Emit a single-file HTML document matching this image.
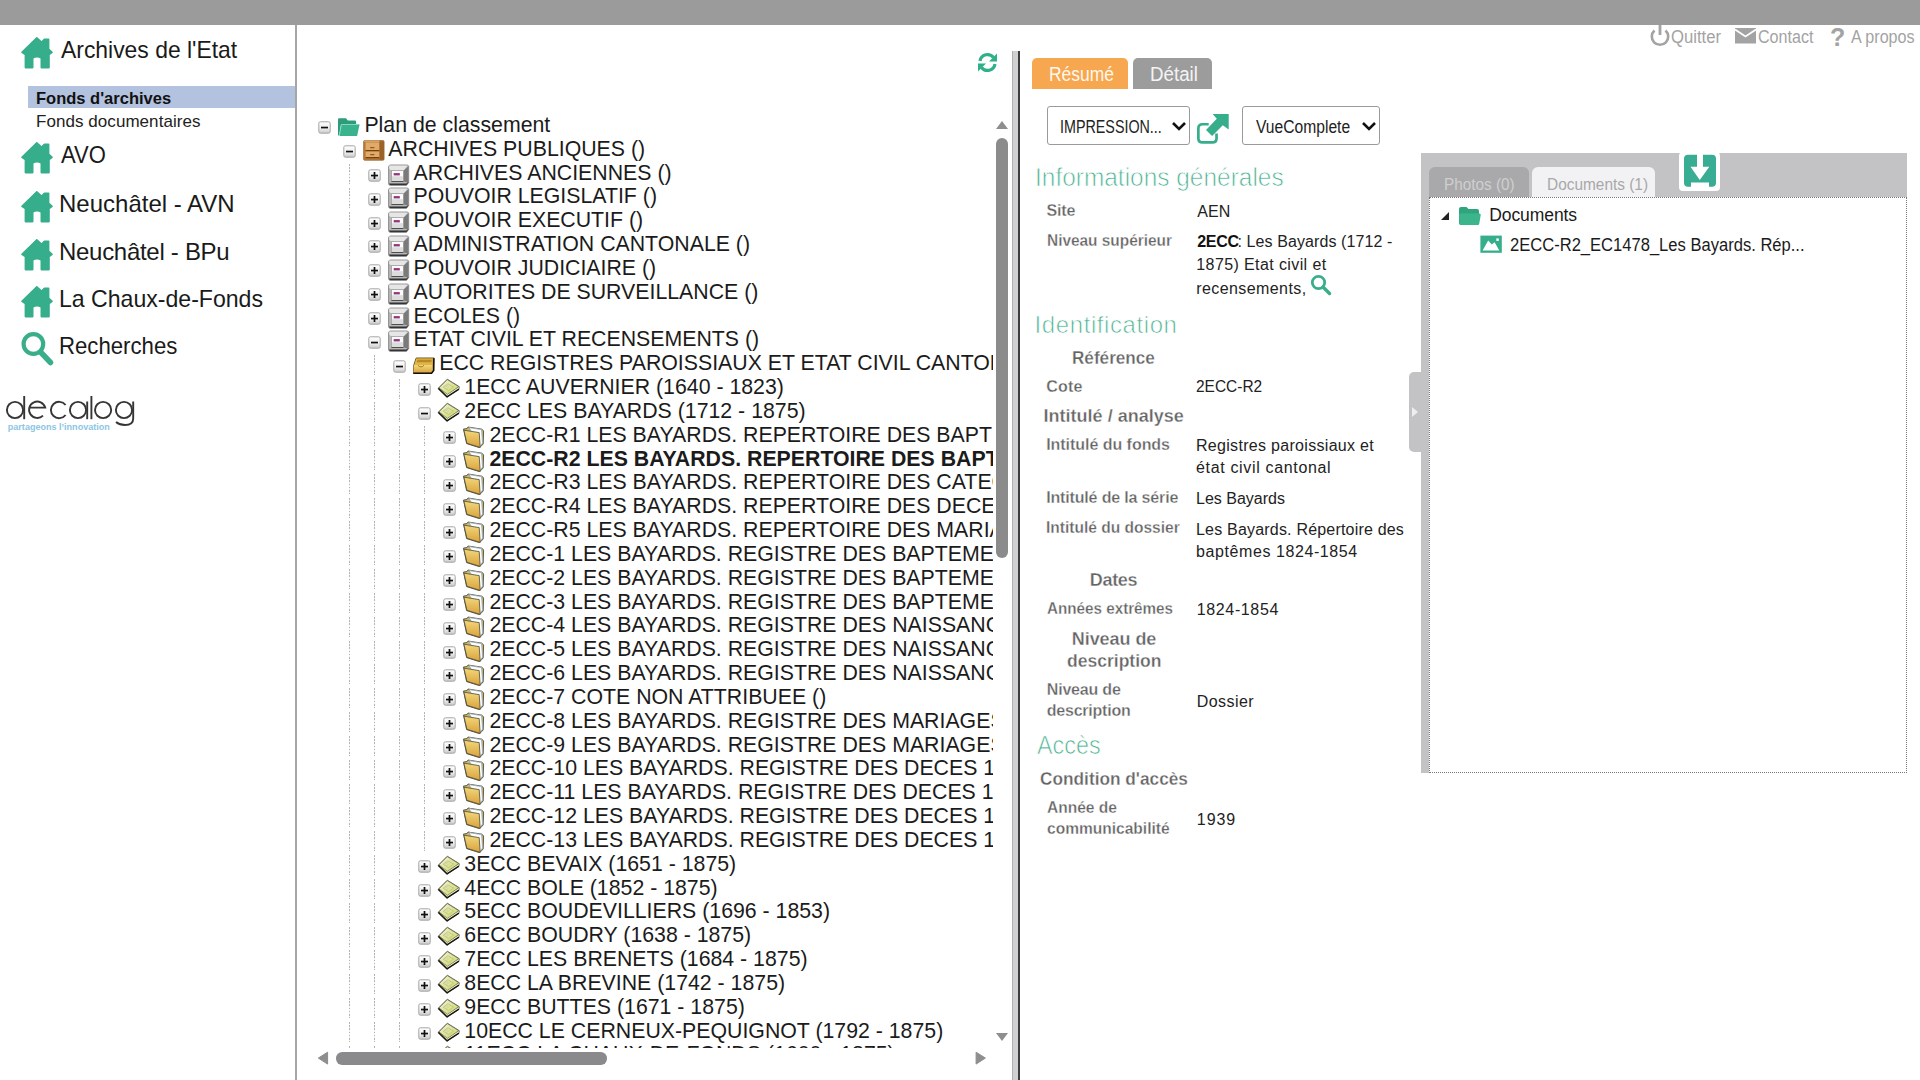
<!DOCTYPE html>
<html><head><meta charset="utf-8">
<style>
*{box-sizing:border-box}
html,body{margin:0;padding:0;width:1920px;height:1080px;overflow:hidden;background:#fff;font-family:"Liberation Sans",sans-serif}
.abs{position:absolute}
.tx{position:absolute;line-height:0;transform-origin:0 0;white-space:nowrap;font-family:"Liberation Sans",sans-serif}
#topbar{position:absolute;left:0;top:0;width:1920px;height:25px;background:#9b9b9b}
#side{position:absolute;left:0;top:25px;width:295px;height:1055px;background:#fff}
#sideline{position:absolute;left:295px;top:25px;width:2px;height:1055px;background:#a6a6a6}
#sel{position:absolute;left:28px;top:86px;width:267px;height:22px;background:#b3c2de}
#tree{position:absolute;left:300px;top:100px;width:692.5px;height:947.5px;overflow:hidden}
.tr{position:absolute;line-height:0;white-space:nowrap;font-size:21.3px;color:#1b1b1b;font-family:"Liberation Sans",sans-serif}
.pm{position:absolute;overflow:visible}
.ic{position:absolute;overflow:visible}
.gd{position:absolute;width:1px;background:repeating-linear-gradient(#b5b5b5 0 1.6px,#f2f2f2 1.6px 3.2px)}
#splitA{position:absolute;left:1012px;top:51px;width:6px;height:1029px;background:#d0cfd2;border-left:1px solid #b0b0b0}
#splitB{position:absolute;left:1018px;top:51px;width:2px;height:1029px;background:#3d3d3d}
.tab{position:absolute;top:58px;height:31px;border-radius:5px 5px 0 0}
.selbox{position:absolute;top:106px;height:39px;border:1px solid #9a9a9a;border-radius:3px;background:#fff}
#docs{position:absolute;left:1421px;top:153px;width:486px;height:620px;background:#c3c3c5}
#docin{position:absolute;left:1429px;top:197px;width:478px;height:576px;background:#fff;border:1px dotted #777}
</style></head><body>
<svg width="0" height="0" style="position:absolute">
 <defs>
  <linearGradient id="gcab" x1="0" y1="0" x2="1" y2="1"><stop offset="0" stop-color="#d99a55"/><stop offset="1" stop-color="#9a5f25"/></linearGradient>
  <linearGradient id="ggbox" x1="0" y1="0" x2="0" y2="1"><stop offset="0" stop-color="#e9e9e9"/><stop offset="1" stop-color="#9d9d9d"/></linearGradient>
  <linearGradient id="gyel" x1="0" y1="0" x2="0" y2="1"><stop offset="0" stop-color="#f3d77a"/><stop offset="1" stop-color="#d9a23c"/></linearGradient>
  <linearGradient id="gbook" x1="0" y1="0" x2="1" y2="1"><stop offset="0" stop-color="#f3f3dc"/><stop offset=".5" stop-color="#dfe59c"/><stop offset="1" stop-color="#c9d84c"/></linearGradient>
  <linearGradient id="gpm" x1="0" y1="0" x2="0" y2="1"><stop offset="0" stop-color="#ffffff"/><stop offset=".6" stop-color="#ececec"/><stop offset="1" stop-color="#c8c8c8"/></linearGradient>
  <symbol id="i-minus" viewBox="0 0 13 13"><rect x="0.8" y="0.8" width="11.4" height="11.4" rx="1.6" fill="url(#gpm)" stroke="#a5a5a5" stroke-width="1"/><rect x="3" y="5.7" width="7" height="1.7" fill="#111"/></symbol>
  <symbol id="i-plus" viewBox="0 0 13 13"><rect x="0.8" y="0.8" width="11.4" height="11.4" rx="1.6" fill="url(#gpm)" stroke="#a5a5a5" stroke-width="1"/><rect x="3" y="5.7" width="7" height="1.7" fill="#111"/><rect x="5.65" y="3" width="1.7" height="7" fill="#111"/></symbol>
  <symbol id="i-gfolder" viewBox="0 0 22 22" overflow="visible">
   <path d="M0 3.4Q0 2.3 1.1 2.3H8L9.8 4.4H16.9Q18.1 4.4 18.1 5.6V8.3H3.1L1.1 19.6Q0 19.6 0 18.4Z" fill="#2e9b7b"/>
   <path d="M3.3 8.1H20.5Q21.6 8.1 21.4 9.2L19.1 19.9H2.2Q1.1 19.9 1.3 18.8Z" fill="#3ab28d"/>
   <path d="M3.4 8.5H20.8M3.3 8.6L1.5 18.8" stroke="#93e3c6" stroke-width=".8" fill="none"/>
</symbol>
  <symbol id="i-cabinet" viewBox="0 0 22 22" overflow="visible">
   <rect x="0.6" y="0.5" width="20.5" height="19.8" rx="1.2" fill="#b9793a" stroke="#83501e" stroke-width=".6"/>
   <path d="M16.5 1L21 1.8V19.6L16.5 20Z" fill="#9c6029"/>
   <path d="M1.2 1.1H16.5" stroke="#e6bd86" stroke-width="1"/>
   <rect x="2.6" y="2.4" width="13.6" height="8" fill="#e2aa69"/>
   <rect x="2.6" y="11.2" width="13.6" height="6.3" fill="#e2aa69"/>
   <path d="M2.6 10.6H16.2M2.6 17.7H16.2" stroke="#6e4214" stroke-width="1.2"/>
   <rect x="7" y="6.9" width="4.6" height="1.3" rx=".6" fill="#9a5420"/>
   <rect x="7" y="13.9" width="4.6" height="1.3" rx=".6" fill="#9a5420"/>
</symbol>
  <symbol id="i-gbox" viewBox="0 0 22 22">
   <path d="M0.6 3Q0.6 1 2.6 1H19.6L20.7 2.2V18.6L18.5 21.4H2.4Q0.6 21.4 0.6 19.5Z" fill="#b8b8b8" stroke="#6b6b6b" stroke-width=".7"/>
   <path d="M1.2 1.6H19.6L15.6 6.7H3.5L1.2 4.5Z" fill="#e6e6e6"/>
   <path d="M15.4 6.7L20.2 2.4V18.4L15.4 17.5Z" fill="#7a7a7a"/>
   <path d="M0.9 19.6H18.3L20.3 18V18.8L18.5 21.1H2Z" fill="#333"/>
   <rect x="3.5" y="6.7" width="11.9" height="10.8" fill="#fbfbfb" stroke="#8a8a8a" stroke-width=".6"/>
   <rect x="4" y="12.2" width="10.9" height="5" fill="#dcdcdc"/>
   <path d="M3.5 17.5H15.4" stroke="#444" stroke-width=".9"/>
   <rect x="5.7" y="9.1" width="6.1" height="2.3" fill="#93357a"/>
  </symbol>
  <symbol id="i-ybox" viewBox="0 0 22 22">
   <path d="M3.2 4H21.2L20.6 16.5L18.6 19.2H0.3L0.8 11Z" fill="#d7a83a" stroke="#3a2a06" stroke-width=".8"/>
   <path d="M3.4 4.4H20.8L19.2 11H1.2Z" fill="#e0b446"/>
   <path d="M4.5 5.8H19L18.2 8.2H3.6Z" fill="#b98a22"/>
   <path d="M0.9 11H19.2L18.6 18.8H0.4Z" fill="url(#gyel)"/>
   <path d="M5 11.3Q8 14.5 11 11.3" stroke="#a97a18" stroke-width="1" fill="none"/>
   <path d="M0.3 19.2H18.6L20.7 16.5V4.2" stroke="#111" stroke-width="1.5" fill="none"/>
</symbol>
  <symbol id="i-book" viewBox="0 0 22 22" overflow="visible">
   <path d="M9.3 1.2L21.3 8.7L20.9 11.4L9 19.2L0.2 10.3Z" fill="#d9dcc0" stroke="#555548" stroke-width=".8"/>
   <path d="M9.3 1.6L20.8 8.7L9.4 16.4L0.9 9.9Z" fill="url(#gbook)" stroke="#5e5e48" stroke-width=".7"/>
   <path d="M5.2 9.2L9.9 5.8L15.6 9L10.7 12.6Z" fill="none" stroke="#b8bf88" stroke-width=".8"/>
   <path d="M7 9.4L10 7.3M8.5 10.5L11.6 8.3" stroke="#c0c690" stroke-width=".6"/>
   <path d="M1.6 11L9.2 17.6L20.6 10.1" stroke="#f6f6ea" stroke-width="1" fill="none"/>
   <path d="M0.4 10.4L9 18.8L20.9 11.2" fill="none" stroke="#1a1a10" stroke-width="1.5"/>
  </symbol>
  <symbol id="i-yfolder" viewBox="0 0 22 22">
   <path d="M0.5 3L4 2.6L5 1L19 3.2L20.6 5L20.2 18L16.6 21.7L3.6 17.6Z" fill="#cdb76a" stroke="#3e3e30" stroke-width=".8"/>
   <path d="M6 1.6L18.6 3.6L19.6 17L17 20.5Z" fill="#fdfdfd" stroke="#8fa3b3" stroke-width=".8"/>
   <path d="M0.9 4.2L16.2 6.6L17.2 21.4L3.9 17.3Z" fill="url(#gyel)" stroke="#4a4a3a" stroke-width=".8"/>
</symbol>
 </defs>
</svg>

<div id="topbar"></div>
<div id="side"></div>
<div id="sideline"></div>
<div id="sel"></div>

<!-- house icons -->
<svg class="abs" style="left:21px;top:37px" width="32" height="32" viewBox="0 0 32 32"><path id="house" d="M15.8 0.9L20.5 5.2L23.4 2.2H27.6V12.2L31 15.4L28 17.6V30.6H20.3V21Q16 18.6 11.7 21V30.6H4.4V17.6L1 15.4Z" fill="#36ad8b" stroke="#36ad8b" stroke-width="1.6" stroke-linejoin="round"/></svg>
<svg class="abs" style="left:21px;top:142px" width="32" height="32" viewBox="0 0 32 32"><use href="#house"/></svg>
<svg class="abs" style="left:21px;top:190.5px" width="32" height="32" viewBox="0 0 32 32"><use href="#house"/></svg>
<svg class="abs" style="left:21px;top:238.5px" width="32" height="32" viewBox="0 0 32 32"><use href="#house"/></svg>
<svg class="abs" style="left:21px;top:286px" width="32" height="32" viewBox="0 0 32 32"><use href="#house"/></svg>
<!-- search -->
<svg class="abs" style="left:21px;top:332px" width="33" height="34" viewBox="0 0 33 34"><circle cx="12.4" cy="12" r="9.8" fill="none" stroke="#3aae8a" stroke-width="4.2"/><path d="M20 20.5L29.5 30.5" stroke="#3aae8a" stroke-width="5.5" stroke-linecap="round"/></svg>
<!-- decalog -->
<svg class="abs" style="left:0;top:390px" width="140" height="45" viewBox="0 0 140 45">
 <g fill="none" stroke="#353535" stroke-width="1.9">
  <circle cx="15" cy="20" r="8.1"/><path d="M24.2 6V29.2"/>
  <path d="M28.8 17.6H45.2A8.2 8.2 0 1 0 43 25.6"/>
  <path d="M65.6 15A8.2 8.2 0 1 0 65.6 25"/>
  <circle cx="78" cy="20" r="8.1"/><path d="M87.2 11.5V29.2"/>
  <path d="M91.4 6V29.2"/>
  <circle cx="103.1" cy="20" r="8.1"/>
  <circle cx="124" cy="20" r="8.1"/><path d="M133.2 11.5V28.5Q133.2 35 125 35Q119.5 35 116 32"/>
 </g>
 <text x="7.8" y="39.6" font-family="Liberation Sans" font-weight="700" font-size="8.4" fill="#8cc6e4" textLength="102" lengthAdjust="spacingAndGlyphs">partageons l’innovation</text>
</svg>

<!-- top right icons -->
<svg class="abs" style="left:1648px;top:24px" width="24" height="24" viewBox="0 0 24 24"><path d="M6.5 6.5A8.2 8.2 0 1 0 17.5 6.5" fill="none" stroke="#a3a3a3" stroke-width="2.6"/><path d="M12 1V11" stroke="#a3a3a3" stroke-width="2.8"/></svg>
<svg class="abs" style="left:1734px;top:27px" width="24" height="18" viewBox="0 0 24 18"><rect x="1" y="1" width="21" height="15.5" fill="#a3a3a3"/><path d="M1 2.5L11.5 9.5L22 2.5" fill="none" stroke="#fff" stroke-width="1.8"/></svg>
<div class="tx" style="left:1830px;top:37px;font-size:25px;font-weight:700;color:#a3a3a3">?</div>

<!-- tree -->
<div id="tree">
<div class='tr' style='left:64.4px;top:24.9px;font-weight:400'>Plan de classement</div>
<svg class='pm' style='left:17.5px;top:21.2px' width='13' height='13'><use href='#i-minus'/></svg>
<svg class='ic' style='left:37.5px;top:15.9px' width='22' height='22'><use href='#i-gfolder'/></svg>
<div class='tr' style='left:88.3px;top:48.7px;font-weight:400'>ARCHIVES PUBLIQUES ()</div>
<svg class='pm' style='left:42.5px;top:45.0px' width='13' height='13'><use href='#i-minus'/></svg>
<svg class='ic' style='left:62.5px;top:39.7px' width='22' height='22'><use href='#i-cabinet'/></svg>
<div class='tr' style='left:113.6px;top:72.6px;font-weight:400'>ARCHIVES ANCIENNES ()</div>
<svg class='pm' style='left:67.5px;top:68.9px' width='13' height='13'><use href='#i-plus'/></svg>
<svg class='ic' style='left:87.5px;top:63.6px' width='22' height='22'><use href='#i-gbox'/></svg>
<div class='tr' style='left:113.6px;top:96.4px;font-weight:400'>POUVOIR LEGISLATIF ()</div>
<svg class='pm' style='left:67.5px;top:92.7px' width='13' height='13'><use href='#i-plus'/></svg>
<svg class='ic' style='left:87.5px;top:87.4px' width='22' height='22'><use href='#i-gbox'/></svg>
<div class='tr' style='left:113.6px;top:120.2px;font-weight:400'>POUVOIR EXECUTIF ()</div>
<svg class='pm' style='left:67.5px;top:116.5px' width='13' height='13'><use href='#i-plus'/></svg>
<svg class='ic' style='left:87.5px;top:111.2px' width='22' height='22'><use href='#i-gbox'/></svg>
<div class='tr' style='left:113.6px;top:144.1px;font-weight:400'>ADMINISTRATION CANTONALE ()</div>
<svg class='pm' style='left:67.5px;top:140.4px' width='13' height='13'><use href='#i-plus'/></svg>
<svg class='ic' style='left:87.5px;top:135.1px' width='22' height='22'><use href='#i-gbox'/></svg>
<div class='tr' style='left:113.6px;top:167.9px;font-weight:400'>POUVOIR JUDICIAIRE ()</div>
<svg class='pm' style='left:67.5px;top:164.2px' width='13' height='13'><use href='#i-plus'/></svg>
<svg class='ic' style='left:87.5px;top:158.9px' width='22' height='22'><use href='#i-gbox'/></svg>
<div class='tr' style='left:113.6px;top:191.7px;font-weight:400'>AUTORITES DE SURVEILLANCE ()</div>
<svg class='pm' style='left:67.5px;top:188.0px' width='13' height='13'><use href='#i-plus'/></svg>
<svg class='ic' style='left:87.5px;top:182.7px' width='22' height='22'><use href='#i-gbox'/></svg>
<div class='tr' style='left:113.6px;top:215.6px;font-weight:400'>ECOLES ()</div>
<svg class='pm' style='left:67.5px;top:211.9px' width='13' height='13'><use href='#i-plus'/></svg>
<svg class='ic' style='left:87.5px;top:206.6px' width='22' height='22'><use href='#i-gbox'/></svg>
<div class='tr' style='left:113.6px;top:239.4px;font-weight:400'>ETAT CIVIL ET RECENSEMENTS ()</div>
<svg class='pm' style='left:67.5px;top:235.7px' width='13' height='13'><use href='#i-minus'/></svg>
<svg class='ic' style='left:87.5px;top:230.4px' width='22' height='22'><use href='#i-gbox'/></svg>
<div class='tr' style='left:139.2px;top:263.2px;font-weight:400'>ECC REGISTRES PAROISSIAUX ET ETAT CIVIL CANTONAL (1600 - 1875)</div>
<svg class='pm' style='left:92.5px;top:259.5px' width='13' height='13'><use href='#i-minus'/></svg>
<svg class='ic' style='left:112.5px;top:254.2px' width='22' height='22'><use href='#i-ybox'/></svg>
<div class='tr' style='left:164.3px;top:287.1px;font-weight:400'>1ECC AUVERNIER (1640 - 1823)</div>
<svg class='pm' style='left:117.5px;top:283.4px' width='13' height='13'><use href='#i-plus'/></svg>
<svg class='ic' style='left:137.5px;top:278.1px' width='22' height='22'><use href='#i-book'/></svg>
<div class='tr' style='left:164.3px;top:310.9px;font-weight:400'>2ECC LES BAYARDS (1712 - 1875)</div>
<svg class='pm' style='left:117.5px;top:307.2px' width='13' height='13'><use href='#i-minus'/></svg>
<svg class='ic' style='left:137.5px;top:301.9px' width='22' height='22'><use href='#i-book'/></svg>
<div class='tr' style='left:189.4px;top:334.7px;font-weight:400'>2ECC-R1 LES BAYARDS. REPERTOIRE DES BAPTEMES 1700-1823</div>
<svg class='pm' style='left:142.5px;top:331.0px' width='13' height='13'><use href='#i-plus'/></svg>
<svg class='ic' style='left:162.5px;top:325.7px' width='22' height='22'><use href='#i-yfolder'/></svg>
<div class='tr' style='left:189.4px;top:358.5px;font-weight:700'>2ECC-R2 LES BAYARDS. REPERTOIRE DES BAPTEMES 1824-1854</div>
<svg class='pm' style='left:142.5px;top:354.8px' width='13' height='13'><use href='#i-plus'/></svg>
<svg class='ic' style='left:162.5px;top:349.5px' width='22' height='22'><use href='#i-yfolder'/></svg>
<div class='tr' style='left:189.4px;top:382.4px;font-weight:400'>2ECC-R3 LES BAYARDS. REPERTOIRE DES CATECHUMENES</div>
<svg class='pm' style='left:142.5px;top:378.7px' width='13' height='13'><use href='#i-plus'/></svg>
<svg class='ic' style='left:162.5px;top:373.4px' width='22' height='22'><use href='#i-yfolder'/></svg>
<div class='tr' style='left:189.4px;top:406.2px;font-weight:400'>2ECC-R4 LES BAYARDS. REPERTOIRE DES DECES</div>
<svg class='pm' style='left:142.5px;top:402.5px' width='13' height='13'><use href='#i-plus'/></svg>
<svg class='ic' style='left:162.5px;top:397.2px' width='22' height='22'><use href='#i-yfolder'/></svg>
<div class='tr' style='left:189.4px;top:430.0px;font-weight:400'>2ECC-R5 LES BAYARDS. REPERTOIRE DES MARIAGES</div>
<svg class='pm' style='left:142.5px;top:426.3px' width='13' height='13'><use href='#i-plus'/></svg>
<svg class='ic' style='left:162.5px;top:421.0px' width='22' height='22'><use href='#i-yfolder'/></svg>
<div class='tr' style='left:189.4px;top:453.9px;font-weight:400'>2ECC-1 LES BAYARDS. REGISTRE DES BAPTEMES</div>
<svg class='pm' style='left:142.5px;top:450.2px' width='13' height='13'><use href='#i-plus'/></svg>
<svg class='ic' style='left:162.5px;top:444.9px' width='22' height='22'><use href='#i-yfolder'/></svg>
<div class='tr' style='left:189.4px;top:477.7px;font-weight:400'>2ECC-2 LES BAYARDS. REGISTRE DES BAPTEMES</div>
<svg class='pm' style='left:142.5px;top:474.0px' width='13' height='13'><use href='#i-plus'/></svg>
<svg class='ic' style='left:162.5px;top:468.7px' width='22' height='22'><use href='#i-yfolder'/></svg>
<div class='tr' style='left:189.4px;top:501.5px;font-weight:400'>2ECC-3 LES BAYARDS. REGISTRE DES BAPTEMES</div>
<svg class='pm' style='left:142.5px;top:497.8px' width='13' height='13'><use href='#i-plus'/></svg>
<svg class='ic' style='left:162.5px;top:492.5px' width='22' height='22'><use href='#i-yfolder'/></svg>
<div class='tr' style='left:189.4px;top:525.4px;font-weight:400'>2ECC-4 LES BAYARDS. REGISTRE DES NAISSANCES</div>
<svg class='pm' style='left:142.5px;top:521.7px' width='13' height='13'><use href='#i-plus'/></svg>
<svg class='ic' style='left:162.5px;top:516.4px' width='22' height='22'><use href='#i-yfolder'/></svg>
<div class='tr' style='left:189.4px;top:549.2px;font-weight:400'>2ECC-5 LES BAYARDS. REGISTRE DES NAISSANCES</div>
<svg class='pm' style='left:142.5px;top:545.5px' width='13' height='13'><use href='#i-plus'/></svg>
<svg class='ic' style='left:162.5px;top:540.2px' width='22' height='22'><use href='#i-yfolder'/></svg>
<div class='tr' style='left:189.4px;top:573.0px;font-weight:400'>2ECC-6 LES BAYARDS. REGISTRE DES NAISSANCES</div>
<svg class='pm' style='left:142.5px;top:569.3px' width='13' height='13'><use href='#i-plus'/></svg>
<svg class='ic' style='left:162.5px;top:564.0px' width='22' height='22'><use href='#i-yfolder'/></svg>
<div class='tr' style='left:189.4px;top:596.9px;font-weight:400'>2ECC-7 COTE NON ATTRIBUEE ()</div>
<svg class='pm' style='left:142.5px;top:593.2px' width='13' height='13'><use href='#i-plus'/></svg>
<svg class='ic' style='left:162.5px;top:587.9px' width='22' height='22'><use href='#i-yfolder'/></svg>
<div class='tr' style='left:189.4px;top:620.7px;font-weight:400'>2ECC-8 LES BAYARDS. REGISTRE DES MARIAGES</div>
<svg class='pm' style='left:142.5px;top:617.0px' width='13' height='13'><use href='#i-plus'/></svg>
<svg class='ic' style='left:162.5px;top:611.7px' width='22' height='22'><use href='#i-yfolder'/></svg>
<div class='tr' style='left:189.4px;top:644.5px;font-weight:400'>2ECC-9 LES BAYARDS. REGISTRE DES MARIAGES</div>
<svg class='pm' style='left:142.5px;top:640.8px' width='13' height='13'><use href='#i-plus'/></svg>
<svg class='ic' style='left:162.5px;top:635.5px' width='22' height='22'><use href='#i-yfolder'/></svg>
<div class='tr' style='left:189.4px;top:668.4px;font-weight:400'>2ECC-10 LES BAYARDS. REGISTRE DES DECES 1760-1800</div>
<svg class='pm' style='left:142.5px;top:664.7px' width='13' height='13'><use href='#i-plus'/></svg>
<svg class='ic' style='left:162.5px;top:659.4px' width='22' height='22'><use href='#i-yfolder'/></svg>
<div class='tr' style='left:189.4px;top:692.2px;font-weight:400'>2ECC-11 LES BAYARDS. REGISTRE DES DECES 1800-1830</div>
<svg class='pm' style='left:142.5px;top:688.5px' width='13' height='13'><use href='#i-plus'/></svg>
<svg class='ic' style='left:162.5px;top:683.2px' width='22' height='22'><use href='#i-yfolder'/></svg>
<div class='tr' style='left:189.4px;top:716.0px;font-weight:400'>2ECC-12 LES BAYARDS. REGISTRE DES DECES 1830-1850</div>
<svg class='pm' style='left:142.5px;top:712.3px' width='13' height='13'><use href='#i-plus'/></svg>
<svg class='ic' style='left:162.5px;top:707.0px' width='22' height='22'><use href='#i-yfolder'/></svg>
<div class='tr' style='left:189.4px;top:739.9px;font-weight:400'>2ECC-13 LES BAYARDS. REGISTRE DES DECES 1850-1875</div>
<svg class='pm' style='left:142.5px;top:736.2px' width='13' height='13'><use href='#i-plus'/></svg>
<svg class='ic' style='left:162.5px;top:730.9px' width='22' height='22'><use href='#i-yfolder'/></svg>
<div class='tr' style='left:164.3px;top:763.7px;font-weight:400'>3ECC BEVAIX (1651 - 1875)</div>
<svg class='pm' style='left:117.5px;top:760.0px' width='13' height='13'><use href='#i-plus'/></svg>
<svg class='ic' style='left:137.5px;top:754.7px' width='22' height='22'><use href='#i-book'/></svg>
<div class='tr' style='left:164.3px;top:787.5px;font-weight:400'>4ECC BOLE (1852 - 1875)</div>
<svg class='pm' style='left:117.5px;top:783.8px' width='13' height='13'><use href='#i-plus'/></svg>
<svg class='ic' style='left:137.5px;top:778.5px' width='22' height='22'><use href='#i-book'/></svg>
<div class='tr' style='left:164.3px;top:811.4px;font-weight:400'>5ECC BOUDEVILLIERS (1696 - 1853)</div>
<svg class='pm' style='left:117.5px;top:807.7px' width='13' height='13'><use href='#i-plus'/></svg>
<svg class='ic' style='left:137.5px;top:802.4px' width='22' height='22'><use href='#i-book'/></svg>
<div class='tr' style='left:164.3px;top:835.2px;font-weight:400'>6ECC BOUDRY (1638 - 1875)</div>
<svg class='pm' style='left:117.5px;top:831.5px' width='13' height='13'><use href='#i-plus'/></svg>
<svg class='ic' style='left:137.5px;top:826.2px' width='22' height='22'><use href='#i-book'/></svg>
<div class='tr' style='left:164.3px;top:859.0px;font-weight:400'>7ECC LES BRENETS (1684 - 1875)</div>
<svg class='pm' style='left:117.5px;top:855.3px' width='13' height='13'><use href='#i-plus'/></svg>
<svg class='ic' style='left:137.5px;top:850.0px' width='22' height='22'><use href='#i-book'/></svg>
<div class='tr' style='left:164.3px;top:882.9px;font-weight:400'>8ECC LA BREVINE (1742 - 1875)</div>
<svg class='pm' style='left:117.5px;top:879.2px' width='13' height='13'><use href='#i-plus'/></svg>
<svg class='ic' style='left:137.5px;top:873.9px' width='22' height='22'><use href='#i-book'/></svg>
<div class='tr' style='left:164.3px;top:906.7px;font-weight:400'>9ECC BUTTES (1671 - 1875)</div>
<svg class='pm' style='left:117.5px;top:903.0px' width='13' height='13'><use href='#i-plus'/></svg>
<svg class='ic' style='left:137.5px;top:897.7px' width='22' height='22'><use href='#i-book'/></svg>
<div class='tr' style='left:164.3px;top:930.5px;font-weight:400'>10ECC LE CERNEUX-PEQUIGNOT (1792 - 1875)</div>
<svg class='pm' style='left:117.5px;top:926.8px' width='13' height='13'><use href='#i-plus'/></svg>
<svg class='ic' style='left:137.5px;top:921.5px' width='22' height='22'><use href='#i-book'/></svg>
<div class='tr' style='left:164.3px;top:954.3px;font-weight:400'>11ECC LA CHAUX-DE-FONDS (1600 - 1875)</div>
<svg class='pm' style='left:117.5px;top:950.6px' width='13' height='13'><use href='#i-plus'/></svg>
<svg class='ic' style='left:137.5px;top:945.3px' width='22' height='22'><use href='#i-book'/></svg>
<div class='gd' style='left:49px;top:64.0px;height:20px'></div>
<div class='gd' style='left:49px;top:87.8px;height:20px'></div>
<div class='gd' style='left:49px;top:111.6px;height:20px'></div>
<div class='gd' style='left:49px;top:135.5px;height:20px'></div>
<div class='gd' style='left:49px;top:159.3px;height:20px'></div>
<div class='gd' style='left:49px;top:183.1px;height:20px'></div>
<div class='gd' style='left:49px;top:207.0px;height:20px'></div>
<div class='gd' style='left:49px;top:230.8px;height:20px'></div>
<div class='gd' style='left:49px;top:254.6px;height:20px'></div>
<div class='gd' style='left:49px;top:278.5px;height:20px'></div>
<div class='gd' style='left:49px;top:302.3px;height:20px'></div>
<div class='gd' style='left:49px;top:326.1px;height:20px'></div>
<div class='gd' style='left:49px;top:349.9px;height:20px'></div>
<div class='gd' style='left:49px;top:373.8px;height:20px'></div>
<div class='gd' style='left:49px;top:397.6px;height:20px'></div>
<div class='gd' style='left:49px;top:421.4px;height:20px'></div>
<div class='gd' style='left:49px;top:445.3px;height:20px'></div>
<div class='gd' style='left:49px;top:469.1px;height:20px'></div>
<div class='gd' style='left:49px;top:492.9px;height:20px'></div>
<div class='gd' style='left:49px;top:516.8px;height:20px'></div>
<div class='gd' style='left:49px;top:540.6px;height:20px'></div>
<div class='gd' style='left:49px;top:564.4px;height:20px'></div>
<div class='gd' style='left:49px;top:588.3px;height:20px'></div>
<div class='gd' style='left:49px;top:612.1px;height:20px'></div>
<div class='gd' style='left:49px;top:635.9px;height:20px'></div>
<div class='gd' style='left:49px;top:659.8px;height:20px'></div>
<div class='gd' style='left:49px;top:683.6px;height:20px'></div>
<div class='gd' style='left:49px;top:707.4px;height:20px'></div>
<div class='gd' style='left:49px;top:731.3px;height:20px'></div>
<div class='gd' style='left:49px;top:755.1px;height:20px'></div>
<div class='gd' style='left:49px;top:778.9px;height:20px'></div>
<div class='gd' style='left:49px;top:802.8px;height:20px'></div>
<div class='gd' style='left:49px;top:826.6px;height:20px'></div>
<div class='gd' style='left:49px;top:850.4px;height:20px'></div>
<div class='gd' style='left:49px;top:874.3px;height:20px'></div>
<div class='gd' style='left:49px;top:898.1px;height:20px'></div>
<div class='gd' style='left:49px;top:921.9px;height:20px'></div>
<div class='gd' style='left:49px;top:945.7px;height:20px'></div>
<div class='gd' style='left:74px;top:254.6px;height:20px'></div>
<div class='gd' style='left:74px;top:278.5px;height:20px'></div>
<div class='gd' style='left:74px;top:302.3px;height:20px'></div>
<div class='gd' style='left:74px;top:326.1px;height:20px'></div>
<div class='gd' style='left:74px;top:349.9px;height:20px'></div>
<div class='gd' style='left:74px;top:373.8px;height:20px'></div>
<div class='gd' style='left:74px;top:397.6px;height:20px'></div>
<div class='gd' style='left:74px;top:421.4px;height:20px'></div>
<div class='gd' style='left:74px;top:445.3px;height:20px'></div>
<div class='gd' style='left:74px;top:469.1px;height:20px'></div>
<div class='gd' style='left:74px;top:492.9px;height:20px'></div>
<div class='gd' style='left:74px;top:516.8px;height:20px'></div>
<div class='gd' style='left:74px;top:540.6px;height:20px'></div>
<div class='gd' style='left:74px;top:564.4px;height:20px'></div>
<div class='gd' style='left:74px;top:588.3px;height:20px'></div>
<div class='gd' style='left:74px;top:612.1px;height:20px'></div>
<div class='gd' style='left:74px;top:635.9px;height:20px'></div>
<div class='gd' style='left:74px;top:659.8px;height:20px'></div>
<div class='gd' style='left:74px;top:683.6px;height:20px'></div>
<div class='gd' style='left:74px;top:707.4px;height:20px'></div>
<div class='gd' style='left:74px;top:731.3px;height:20px'></div>
<div class='gd' style='left:74px;top:755.1px;height:20px'></div>
<div class='gd' style='left:74px;top:778.9px;height:20px'></div>
<div class='gd' style='left:74px;top:802.8px;height:20px'></div>
<div class='gd' style='left:74px;top:826.6px;height:20px'></div>
<div class='gd' style='left:74px;top:850.4px;height:20px'></div>
<div class='gd' style='left:74px;top:874.3px;height:20px'></div>
<div class='gd' style='left:74px;top:898.1px;height:20px'></div>
<div class='gd' style='left:74px;top:921.9px;height:20px'></div>
<div class='gd' style='left:74px;top:945.7px;height:20px'></div>
<div class='gd' style='left:99px;top:278.5px;height:20px'></div>
<div class='gd' style='left:99px;top:302.3px;height:20px'></div>
<div class='gd' style='left:99px;top:326.1px;height:20px'></div>
<div class='gd' style='left:99px;top:349.9px;height:20px'></div>
<div class='gd' style='left:99px;top:373.8px;height:20px'></div>
<div class='gd' style='left:99px;top:397.6px;height:20px'></div>
<div class='gd' style='left:99px;top:421.4px;height:20px'></div>
<div class='gd' style='left:99px;top:445.3px;height:20px'></div>
<div class='gd' style='left:99px;top:469.1px;height:20px'></div>
<div class='gd' style='left:99px;top:492.9px;height:20px'></div>
<div class='gd' style='left:99px;top:516.8px;height:20px'></div>
<div class='gd' style='left:99px;top:540.6px;height:20px'></div>
<div class='gd' style='left:99px;top:564.4px;height:20px'></div>
<div class='gd' style='left:99px;top:588.3px;height:20px'></div>
<div class='gd' style='left:99px;top:612.1px;height:20px'></div>
<div class='gd' style='left:99px;top:635.9px;height:20px'></div>
<div class='gd' style='left:99px;top:659.8px;height:20px'></div>
<div class='gd' style='left:99px;top:683.6px;height:20px'></div>
<div class='gd' style='left:99px;top:707.4px;height:20px'></div>
<div class='gd' style='left:99px;top:731.3px;height:20px'></div>
<div class='gd' style='left:99px;top:755.1px;height:20px'></div>
<div class='gd' style='left:99px;top:778.9px;height:20px'></div>
<div class='gd' style='left:99px;top:802.8px;height:20px'></div>
<div class='gd' style='left:99px;top:826.6px;height:20px'></div>
<div class='gd' style='left:99px;top:850.4px;height:20px'></div>
<div class='gd' style='left:99px;top:874.3px;height:20px'></div>
<div class='gd' style='left:99px;top:898.1px;height:20px'></div>
<div class='gd' style='left:99px;top:921.9px;height:20px'></div>
<div class='gd' style='left:99px;top:945.7px;height:20px'></div>
<div class='gd' style='left:124px;top:326.1px;height:20px'></div>
<div class='gd' style='left:124px;top:349.9px;height:20px'></div>
<div class='gd' style='left:124px;top:373.8px;height:20px'></div>
<div class='gd' style='left:124px;top:397.6px;height:20px'></div>
<div class='gd' style='left:124px;top:421.4px;height:20px'></div>
<div class='gd' style='left:124px;top:445.3px;height:20px'></div>
<div class='gd' style='left:124px;top:469.1px;height:20px'></div>
<div class='gd' style='left:124px;top:492.9px;height:20px'></div>
<div class='gd' style='left:124px;top:516.8px;height:20px'></div>
<div class='gd' style='left:124px;top:540.6px;height:20px'></div>
<div class='gd' style='left:124px;top:564.4px;height:20px'></div>
<div class='gd' style='left:124px;top:588.3px;height:20px'></div>
<div class='gd' style='left:124px;top:612.1px;height:20px'></div>
<div class='gd' style='left:124px;top:635.9px;height:20px'></div>
<div class='gd' style='left:124px;top:659.8px;height:20px'></div>
<div class='gd' style='left:124px;top:683.6px;height:20px'></div>
<div class='gd' style='left:124px;top:707.4px;height:20px'></div>
<div class='gd' style='left:124px;top:731.3px;height:20px'></div>
</div>
<!-- refresh -->
<svg class="abs" style="left:976px;top:51px" width="23" height="23" viewBox="0 0 23 23"><g fill="none" stroke="#2fb08a" stroke-width="3.2"><path d="M4 10A7.6 7.6 0 0 1 17.5 6.5"/><path d="M19 13A7.6 7.6 0 0 1 5.5 16.5"/></g><path d="M21 2.5V10.5H13Z" fill="#2fb08a"/><path d="M2 20.5V12.5H10Z" fill="#2fb08a"/></svg>
<!-- tree scrollbars -->
<svg class="abs" style="left:994px;top:118px" width="16" height="14" viewBox="0 0 16 14"><path d="M2 11L8 3L14 11Z" fill="#8e8e8e"/></svg>
<div class="abs" style="left:995.5px;top:137.5px;width:12.5px;height:420px;border-radius:6px;background:#8b8b8b"></div>
<svg class="abs" style="left:994px;top:1030px" width="16" height="14" viewBox="0 0 16 14"><path d="M2 3L8 11L14 3Z" fill="#8e8e8e"/></svg>
<svg class="abs" style="left:315px;top:1050px" width="16" height="16" viewBox="0 0 16 16"><path d="M3.3 8.1L12.6 2.2V14.1Z" fill="#8e8e8e" stroke="#8e8e8e" stroke-width="1" stroke-linejoin="round"/></svg>
<div class="abs" style="left:336px;top:1052px;width:270.5px;height:12.5px;border-radius:6.25px;background:#8a898b"></div>
<svg class="abs" style="left:972px;top:1050px" width="16" height="16" viewBox="0 0 16 16"><path d="M13.4 8.1L4.1 2.2V14.1Z" fill="#8e8e8e" stroke="#8e8e8e" stroke-width="1" stroke-linejoin="round"/></svg>
<div id="splitA"></div><div id="splitB"></div>

<!-- detail -->
<div class="tab" style="left:1032px;width:96px;background:#f7a74f"></div>
<div class="tab" style="left:1133px;width:79px;background:#9c9c9c"></div>
<div class="selbox" style="left:1047px;width:143px"></div>
<div class="selbox" style="left:1242px;width:138px"></div>
<svg class="abs" style="left:1170px;top:118px" width="18" height="16" viewBox="0 0 18 16"><path d="M3 5L9 11L15 5" fill="none" stroke="#111" stroke-width="2.6"/></svg>
<svg class="abs" style="left:1360px;top:118px" width="18" height="16" viewBox="0 0 18 16"><path d="M3 5L9 11L15 5" fill="none" stroke="#111" stroke-width="2.6"/></svg>
<!-- share icon -->
<svg class="abs" style="left:1190px;top:104px" width="50" height="46" viewBox="0 0 50 46"><path d="M18.7 20.25H12.5Q8.35 20.25 8.35 24.4V34.3Q8.35 38.45 12.5 38.45H22.4Q26.55 38.45 26.55 34.3V29.4" fill="none" stroke="#36ad8b" stroke-width="2.7"/><path d="M22.6 10H38.7V25.5L32.8 21.3L22.1 31.9L16 26L26.8 14.7Z" fill="#36ad8b"/></svg>
<!-- search small -->
<svg class="abs" style="left:1310px;top:274px" width="22" height="22" viewBox="0 0 22 22"><circle cx="8.5" cy="8.5" r="6.2" fill="none" stroke="#3aae8a" stroke-width="2.8"/><path d="M13 13L19.5 19.5" stroke="#3aae8a" stroke-width="3.4" stroke-linecap="round"/></svg>

<!-- documents panel -->
<div id="docs"></div>
<div class="abs" style="left:1429px;top:166.5px;width:100px;height:31px;background:#a9a9ab;border-radius:6px 6px 0 0"></div>
<div class="abs" style="left:1532px;top:166.5px;width:123px;height:31px;background:#f2f2f4;border-radius:6px 6px 0 0"></div>
<div id="docin"></div>
<div class="abs" style="left:1409px;top:372px;width:12px;height:80px;background:#c3c3c5;border-radius:5px 0 0 5px"></div>
<svg class="abs" style="left:1410px;top:405px" width="10" height="14" viewBox="0 0 10 14"><path d="M2 2L8 7L2 12Z" fill="#eeeeee"/></svg>
<div class="abs" style="left:1679px;top:152px;width:41px;height:39px;background:#fff;border-radius:4px"></div>
<svg class="abs" style="left:1683px;top:154px" width="34" height="34" viewBox="0 0 34 34"><path d="M5 0.8H29Q33 0.8 33 4.8V28.7Q33 32.7 29 32.7H26V28.6H8V32.7H5Q1 32.7 1 28.7V4.8Q1 0.8 5 0.8Z" fill="#38ad93"/><path d="M14 0H20V12.8H26.3L16.8 26L7.5 12.8H14Z" fill="#fff"/></svg>
<svg class="abs" style="left:1440px;top:211px" width="10" height="10" viewBox="0 0 10 10"><path d="M9 1V9H1Z" fill="#222"/></svg>
<svg class="abs" style="left:1458px;top:206px" width="24" height="20" viewBox="0 0 24 20"><path d="M1 3Q1 1 3 1H8.5L10.5 3H19Q21 3 21 5V17Q21 19 19 19H3Q1 19 1 17Z" fill="#2fa57e"/><path d="M2.5 7.5H21.5Q23 7.5 22.7 9L21.3 17.5Q21 19 19.5 19H3.2Q1.8 19 1.7 17.5L1 9Q.9 7.5 2.5 7.5Z" fill="#3cb58c"/></svg>
<svg class="abs" style="left:1480px;top:235px" width="22" height="18" viewBox="0 0 22 18"><rect x="0.4" y="0.6" width="21.4" height="17.2" fill="#36ad8b"/><path d="M2.6 15.5L8.2 5.5L11.8 9.4L14.6 7.2L19.3 15.5Z" fill="#fff"/><rect x="16.3" y="3.4" width="2.5" height="2.5" fill="#fff"/></svg>

<div class='tx' style='left:61.0px;top:50.3px;font-size:24px;font-weight:400;color:#1a1a1a;letter-spacing:0.000px;transform:scaleX(0.9541);'>Archives de l&#x27;Etat</div>
<div class='tx' style='left:36.0px;top:99.0px;font-size:17px;font-weight:700;color:#111;letter-spacing:0.000px;transform:scaleX(0.9710);'>Fonds d&#x27;archives</div>
<div class='tx' style='left:36.0px;top:121.7px;font-size:17px;font-weight:400;color:#222;letter-spacing:0.056px;'>Fonds documentaires</div>
<div class='tx' style='left:60.5px;top:155.0px;font-size:24px;font-weight:400;color:#1a1a1a;letter-spacing:0.000px;transform:scaleX(0.9167);'>AVO</div>
<div class='tx' style='left:59.0px;top:203.8px;font-size:24px;font-weight:400;color:#1a1a1a;letter-spacing:0.000px;'>Neuchâtel - AVN</div>
<div class='tx' style='left:59.0px;top:251.5px;font-size:24px;font-weight:400;color:#1a1a1a;letter-spacing:-0.293px;'>Neuchâtel - BPu</div>
<div class='tx' style='left:59.1px;top:299.0px;font-size:24px;font-weight:400;color:#1a1a1a;letter-spacing:0.000px;transform:scaleX(0.9617);'>La Chaux-de-Fonds</div>
<div class='tx' style='left:59.2px;top:346.0px;font-size:24px;font-weight:400;color:#1a1a1a;letter-spacing:0.000px;transform:scaleX(0.9240);'>Recherches</div>
<div class='tx' style='left:1671.0px;top:36.7px;font-size:17.5px;font-weight:400;color:#a3a3a3;letter-spacing:0.000px;transform:scaleX(0.9520);'>Quitter</div>
<div class='tx' style='left:1758.1px;top:36.7px;font-size:17.5px;font-weight:400;color:#a3a3a3;letter-spacing:0.000px;transform:scaleX(0.9187);'>Contact</div>
<div class='tx' style='left:1851.0px;top:36.7px;font-size:17.5px;font-weight:400;color:#a3a3a3;letter-spacing:0.000px;transform:scaleX(0.9203);'>A propos</div>
<div class='tx' style='left:1048.5px;top:73.8px;font-size:20px;font-weight:400;color:#fff8ee;letter-spacing:0.000px;transform:scaleX(0.8723);'>Résumé</div>
<div class='tx' style='left:1149.5px;top:73.8px;font-size:20px;font-weight:400;color:#f4f4f4;letter-spacing:0.000px;transform:scaleX(0.9379);'>Détail</div>
<div class='tx' style='left:1060.2px;top:126.9px;font-size:18px;font-weight:400;color:#222;letter-spacing:0.000px;transform:scaleX(0.7952);'>IMPRESSION...</div>
<div class='tx' style='left:1256.4px;top:126.9px;font-size:18px;font-weight:400;color:#222;letter-spacing:0.000px;transform:scaleX(0.8685);'>VueComplete</div>
<div class='tx' style='left:1034.9px;top:176.5px;font-size:26.5px;font-weight:400;color:#4fb393;letter-spacing:0.000px;transform:scaleX(0.9223);-webkit-text-stroke:0.75px #fff'>Informations générales</div>
<div class='tx' style='left:1046.5px;top:211.2px;font-size:16px;font-weight:700;color:#646464;letter-spacing:-0.167px;-webkit-text-stroke:0.3px #fff'>Site</div>
<div class='tx' style='left:1197.3px;top:212.0px;font-size:16px;font-weight:400;color:#222;letter-spacing:0.050px;'>AEN</div>
<div class='tx' style='left:1046.5px;top:241.0px;font-size:16px;font-weight:700;color:#646464;letter-spacing:0.000px;transform:scaleX(0.9629);-webkit-text-stroke:0.3px #fff'>Niveau supérieur</div>
<div class='tx' style='left:1197.3px;top:242.4px;font-size:16px;font-weight:700;color:#111;letter-spacing:-0.333px;'>2ECC</div>
<div class='tx' style='left:1237.5px;top:242.4px;font-size:16px;font-weight:400;color:#222;letter-spacing:0.095px;'>: Les Bayards (1712 -</div>
<div class='tx' style='left:1196.3px;top:264.6px;font-size:16px;font-weight:400;color:#222;letter-spacing:0.394px;'>1875) Etat civil et</div>
<div class='tx' style='left:1196.3px;top:289.3px;font-size:16px;font-weight:400;color:#222;letter-spacing:0.408px;'>recensements,</div>
<div class='tx' style='left:1034.6px;top:325.2px;font-size:24px;font-weight:400;color:#4fb393;letter-spacing:0.585px;-webkit-text-stroke:0.7px #fff'>Identification</div>
<div class='tx' style='left:1072.0px;top:357.5px;font-size:18px;font-weight:700;color:#646464;letter-spacing:0.000px;transform:scaleX(0.9518);-webkit-text-stroke:0.3px #fff'>Référence</div>
<div class='tx' style='left:1046.2px;top:387.0px;font-size:16px;font-weight:700;color:#646464;letter-spacing:0.200px;-webkit-text-stroke:0.3px #fff'>Cote</div>
<div class='tx' style='left:1196.0px;top:387.0px;font-size:16px;font-weight:400;color:#222;letter-spacing:0.000px;transform:scaleX(0.9672);'>2ECC-R2</div>
<div class='tx' style='left:1043.6px;top:415.9px;font-size:18px;font-weight:700;color:#646464;letter-spacing:0.006px;-webkit-text-stroke:0.3px #fff'>Intitulé / analyse</div>
<div class='tx' style='left:1046.2px;top:444.9px;font-size:16px;font-weight:700;color:#646464;letter-spacing:-0.038px;-webkit-text-stroke:0.3px #fff'>Intitulé du fonds</div>
<div class='tx' style='left:1196.0px;top:446.2px;font-size:16px;font-weight:400;color:#222;letter-spacing:0.304px;'>Registres paroissiaux et</div>
<div class='tx' style='left:1196.0px;top:468.2px;font-size:16px;font-weight:400;color:#222;letter-spacing:0.661px;'>état civil cantonal</div>
<div class='tx' style='left:1046.2px;top:498.0px;font-size:16px;font-weight:700;color:#646464;letter-spacing:-0.158px;-webkit-text-stroke:0.3px #fff'>Intitulé de la série</div>
<div class='tx' style='left:1196.0px;top:499.3px;font-size:16px;font-weight:400;color:#222;letter-spacing:0.000px;'>Les Bayards</div>
<div class='tx' style='left:1046.0px;top:528.3px;font-size:16px;font-weight:700;color:#646464;letter-spacing:0.000px;transform:scaleX(0.9706);-webkit-text-stroke:0.3px #fff'>Intitulé du dossier</div>
<div class='tx' style='left:1196.0px;top:529.6px;font-size:16px;font-weight:400;color:#222;letter-spacing:0.196px;'>Les Bayards. Répertoire des</div>
<div class='tx' style='left:1196.0px;top:551.7px;font-size:16px;font-weight:400;color:#222;letter-spacing:0.588px;'>baptêmes 1824-1854</div>
<div class='tx' style='left:1089.8px;top:580.4px;font-size:18px;font-weight:700;color:#646464;letter-spacing:-0.325px;-webkit-text-stroke:0.3px #fff'>Dates</div>
<div class='tx' style='left:1046.8px;top:609.0px;font-size:16px;font-weight:700;color:#646464;letter-spacing:0.000px;transform:scaleX(0.9512);-webkit-text-stroke:0.3px #fff'>Années extrêmes</div>
<div class='tx' style='left:1196.8px;top:610.0px;font-size:16px;font-weight:400;color:#222;letter-spacing:0.625px;'>1824-1854</div>
<div class='tx' style='left:1071.8px;top:638.7px;font-size:18px;font-weight:700;color:#646464;letter-spacing:-0.062px;-webkit-text-stroke:0.3px #fff'>Niveau de</div>
<div class='tx' style='left:1066.8px;top:661.0px;font-size:18px;font-weight:700;color:#646464;letter-spacing:0.000px;transform:scaleX(0.9737);-webkit-text-stroke:0.3px #fff'>description</div>
<div class='tx' style='left:1046.8px;top:690.3px;font-size:16px;font-weight:700;color:#646464;letter-spacing:-0.200px;-webkit-text-stroke:0.3px #fff'>Niveau de</div>
<div class='tx' style='left:1046.8px;top:711.0px;font-size:16px;font-weight:700;color:#646464;letter-spacing:-0.230px;-webkit-text-stroke:0.3px #fff'>description</div>
<div class='tx' style='left:1196.8px;top:702.2px;font-size:16px;font-weight:400;color:#222;letter-spacing:0.417px;'>Dossier</div>
<div class='tx' style='left:1037.1px;top:745.4px;font-size:25px;font-weight:400;color:#4fb393;letter-spacing:0.000px;transform:scaleX(0.9334);-webkit-text-stroke:0.7px #fff'>Accès</div>
<div class='tx' style='left:1039.8px;top:779.0px;font-size:18px;font-weight:700;color:#646464;letter-spacing:0.000px;transform:scaleX(0.9589);-webkit-text-stroke:0.3px #fff'>Condition d&#x27;accès</div>
<div class='tx' style='left:1046.8px;top:807.8px;font-size:16px;font-weight:700;color:#646464;letter-spacing:0.000px;transform:scaleX(0.9714);-webkit-text-stroke:0.3px #fff'>Année de</div>
<div class='tx' style='left:1046.8px;top:828.6px;font-size:16px;font-weight:700;color:#646464;letter-spacing:0.000px;transform:scaleX(0.9712);-webkit-text-stroke:0.3px #fff'>communicabilité</div>
<div class='tx' style='left:1196.8px;top:820.3px;font-size:16px;font-weight:400;color:#222;letter-spacing:0.933px;'>1939</div>
<div class='tx' style='left:1443.8px;top:185.1px;font-size:17px;font-weight:400;color:#cfcfcf;letter-spacing:0.000px;transform:scaleX(0.9000);'>Photos (0)</div>
<div class='tx' style='left:1546.8px;top:185.1px;font-size:17px;font-weight:400;color:#a8a8a8;letter-spacing:0.000px;transform:scaleX(0.9064);'>Documents (1)</div>
<div class='tx' style='left:1489.2px;top:215.3px;font-size:17.5px;font-weight:400;color:#1a1a1a;letter-spacing:-0.075px;'>Documents</div>
<div class='tx' style='left:1510.1px;top:245.0px;font-size:17.5px;font-weight:400;color:#1a1a1a;letter-spacing:0.000px;transform:scaleX(0.9463);'>2ECC-R2_EC1478_Les Bayards. Rép...</div>
</body></html>
